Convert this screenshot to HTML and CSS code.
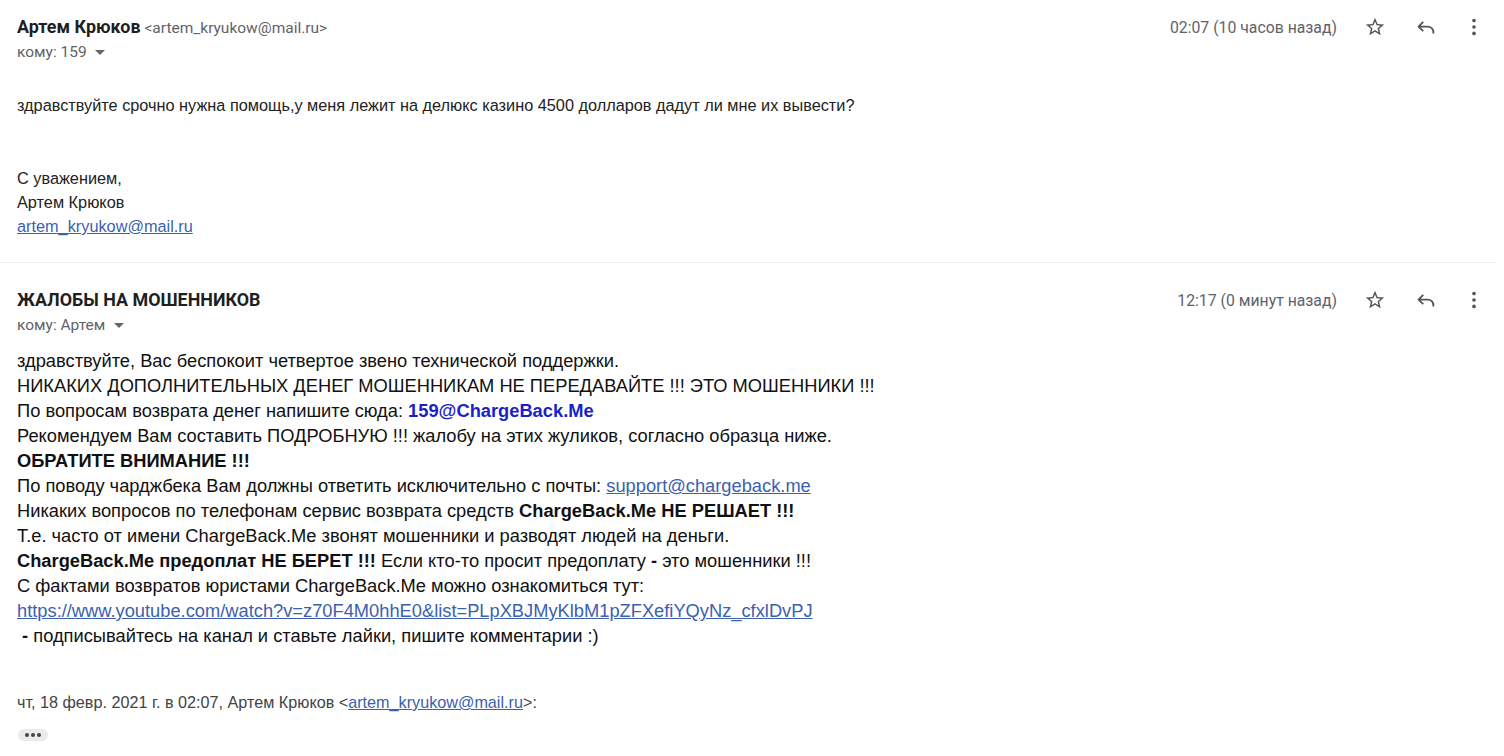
FILE: index.html
```html
<!DOCTYPE html>
<html lang="ru">
<head>
  <meta charset="UTF-8">
  <meta name="viewport" content="width=device-width, initial-scale=1.0">
  <title>Переписка</title>
  <link rel="stylesheet" href="styles.css">
</head>
<body>
  <!-- письмо 1 -->
  <div class="message first">
    <div class="msg-head">
      <div class="sender">
        <div class="from"><span class="name">Артем Крюков</span> <span class="addr">&lt;artem_kryukow@mail.ru&gt;</span></div>
        <div class="to">кому: 159 <span class="caret"></span></div>
      </div>
      <div class="actions">
        <span class="time">02:07 (10 часов назад)</span>
        <span class="icon">
          <svg viewBox="0 0 24 24" width="22" height="22"><path d="M22 9.24l-7.19-.62L12 2 9.19 8.63 2 9.24l5.46 4.73L5.82 21 12 17.27 18.18 21l-1.63-7.03L22 9.24zM12 15.4l-3.76 2.27 1-4.28-3.32-2.88 4.38-.38L12 6.1l1.71 4.04 4.38.38-3.32 2.88 1 4.28L12 15.4z"/></svg>
        </span>
        <span class="icon">
          <svg viewBox="0 0 24 24" width="22" height="22"><path class="stroke" d="M9 6.5L3.8 11.5 9 16.5M4 11.5h10a6 6 0 0 1 6 6v1.5"/></svg>
        </span>
        <span class="icon">
          <svg viewBox="0 0 24 24" width="22" height="22"><circle cx="12" cy="5" r="2"/><circle cx="12" cy="12" r="2"/><circle cx="12" cy="19" r="2"/></svg>
        </span>
      </div>
    </div>
    <div class="plain">
      <p>здравствуйте срочно нужна помощь,у меня лежит на делюкс казино 4500 долларов дадут ли мне их вывести?</p>
      <p class="sign">С уважением,<br>Артем Крюков<br><a href="#">artem_kryukow@mail.ru</a></p>
    </div>
  </div>

  <!-- письмо 2 -->
  <div class="message second">
    <div class="msg-head">
      <div class="sender">
        <div class="from"><span class="name">ЖАЛОБЫ НА МОШЕННИКОВ</span></div>
        <div class="to">кому: Артем <span class="caret"></span></div>
      </div>
      <div class="actions">
        <span class="time">12:17 (0 минут назад)</span>
        <span class="icon">
          <svg viewBox="0 0 24 24" width="22" height="22"><path d="M22 9.24l-7.19-.62L12 2 9.19 8.63 2 9.24l5.46 4.73L5.82 21 12 17.27 18.18 21l-1.63-7.03L22 9.24zM12 15.4l-3.76 2.27 1-4.28-3.32-2.88 4.38-.38L12 6.1l1.71 4.04 4.38.38-3.32 2.88 1 4.28L12 15.4z"/></svg>
        </span>
        <span class="icon">
          <svg viewBox="0 0 24 24" width="22" height="22"><path class="stroke" d="M9 6.5L3.8 11.5 9 16.5M4 11.5h10a6 6 0 0 1 6 6v1.5"/></svg>
        </span>
        <span class="icon">
          <svg viewBox="0 0 24 24" width="22" height="22"><circle cx="12" cy="5" r="2"/><circle cx="12" cy="12" r="2"/><circle cx="12" cy="19" r="2"/></svg>
        </span>
      </div>
    </div>
    <div class="reply-body">
      здравствуйте, Вас беспокоит четвертое звено технической поддержки.<br>
      НИКАКИХ ДОПОЛНИТЕЛЬНЫХ ДЕНЕГ МОШЕННИКАМ НЕ ПЕРЕДАВАЙТЕ !!! ЭТО МОШЕННИКИ !!!<br>
      По вопросам возврата денег напишите сюда: <b class="blue">159@ChargeBack.Me</b><br>
      Рекомендуем Вам составить ПОДРОБНУЮ !!! жалобу на этих жуликов, согласно образца ниже.<br>
      <b>ОБРАТИТЕ ВНИМАНИЕ !!!</b><br>
      По поводу чарджбека Вам должны ответить исключительно с почты: <a href="#">support@chargeback.me</a><br>
      Никаких вопросов по телефонам сервис возврата средств <b>ChargeBack.Me НЕ РЕШАЕТ !!!</b><br>
      Т.е. часто от имени ChargeBack.Me звонят мошенники и разводят людей на деньги.<br>
      <b>ChargeBack.Me предоплат НЕ БЕРЕТ !!!</b> Если кто-то просит предоплату <b>-</b> это мошенники !!!<br>
      С фактами возвратов юристами ChargeBack.Me можно ознакомиться тут:<br>
      <a href="#">https://www.youtube.com/watch?v=z70F4M0hhE0&amp;list=PLpXBJMyKlbM1pZFXefiYQyNz_cfxlDvPJ</a><br>
      &nbsp;<b>-</b> подписывайтесь на канал и ставьте лайки, пишите комментарии :)
    </div>
    <div class="quote-head">чт, 18 февр. 2021 г. в 02:07, Артем Крюков &lt;<a href="#">artem_kryukow@mail.ru</a>&gt;:</div>
    <div class="more-dots"><span></span><span></span><span></span></div>
  </div>
</body>
</html>
```

FILE: styles.css
```css
body {
  margin: 0;
  background: #fff;
  color: #222;
  font-family: Roboto, "Liberation Sans", Arial, sans-serif;
}
.message {
  padding: 0 0 0 17px;
  margin-right: 7px;
}
.message.first {
  padding-top: 16px;
  padding-bottom: 24px;
  border-bottom: 1px solid #efefef;
}
.message.second {
  padding-top: 26px;
}
.msg-head {
  display: flex;
  justify-content: space-between;
  align-items: flex-start;
}
.from {
  line-height: 22px;
}
.name {
  font-weight: bold;
  font-size: 17.9px;
  color: #1f1f1f;
}
.addr {
  font-size: 15.5px;
  color: #5f6368;
}
.to {
  font-size: 15.5px;
  color: #5f6368;
  line-height: 20px;
  margin-top: 3px;
}
.caret {
  display: inline-block;
  width: 0;
  height: 0;
  margin-left: 5px;
  vertical-align: middle;
  border-left: 5px solid transparent;
  border-right: 5px solid transparent;
  border-top: 5px solid #666;
}
.actions {
  display: flex;
  align-items: center;
  height: 22px;
}
.time {
  font-size: 15.8px;
  color: #5f6368;
  margin-right: 12px;
}
.icon {
  width: 51px;
  display: flex;
  justify-content: center;
}
.icon:last-child {
  width: 46px;
}
.icon svg {
  fill: #555;
}
.icon svg .stroke {
  fill: none;
  stroke: #555;
  stroke-width: 2;
  stroke-linejoin: round;
}
.plain {
  font-family: "Liberation Sans", Arial, sans-serif;
  font-size: 16.3px;
  line-height: 24px;
}
.plain p {
  margin: 0;
}
.plain p:first-child {
  margin-top: 31px;
}
.plain .sign {
  margin-top: 49px;
}
a {
  color: #3c5fb0;
}
.reply-body {
  font-family: "Liberation Sans", Arial, sans-serif;
  font-size: 18.3px;
  line-height: 25px;
  color: #111;
  margin-top: 13px;
}
.blue {
  color: #1b1fc8;
}
.quote-head {
  font-family: "Liberation Sans", Arial, sans-serif;
  font-size: 16.2px;
  color: #444;
  margin-top: 44px;
  line-height: 20px;
}
.quote-head a {
  color: #3c5fb0;
}
.more-dots {
  display: inline-flex;
  align-items: center;
  justify-content: center;
  gap: 2px;
  width: 30px;
  height: 12px;
  margin-top: 17px;
  margin-left: 1px;
  border-radius: 6px;
  background: #e8eaed;
}
.more-dots span {
  width: 4px;
  height: 4px;
  border-radius: 50%;
  background: #444;
}
```
